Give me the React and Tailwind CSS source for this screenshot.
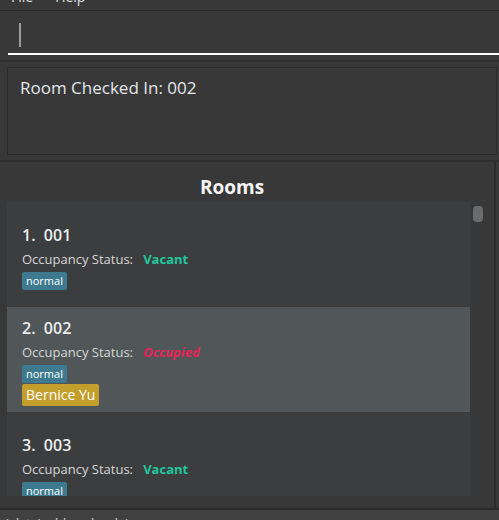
const rooms = [
  { idx: 1, num: '001', occupied: false, tags: ['normal'], guest: null },
  { idx: 2, num: '002', occupied: true, tags: ['normal'], guest: 'Bernice Yu', selected: true },
  { idx: 3, num: '003', occupied: false, tags: ['normal'], guest: null },
]

const RoomCard = ({ room }) => (
  <div
    className={`h-[105px] shrink-0 flex flex-col justify-center pl-[15px] pt-[4px] ${
      room.selected ? 'bg-[#515658]' : 'bg-[#3c3d3f]'
    }`}
  >
    <div className="text-[16px] leading-[22px] font-semibold text-[#ededed] whitespace-pre">
      {room.idx}.  {room.num}
    </div>
    <div className="mt-[4px] text-[13px] leading-[18px] text-[#d6d6d6] whitespace-pre">
      Occupancy Status:  {' '}
      {room.occupied ? (
        <span className="font-bold italic text-[#e8245a]">Occupied</span>
      ) : (
        <span className="font-bold text-[#20c79d]">Vacant</span>
      )}
    </div>
    <div className="mt-[4px] flex">
      {room.tags.map((t) => (
        <span
          key={t}
          className="bg-[#3d7a8f] text-white text-[11px] leading-[18px] px-[4px] rounded-[2px]"
        >
          {t}
        </span>
      ))}
    </div>
    {room.guest && (
      <div className="mt-[1px] flex">
        <span className="bg-[#c39e2b] text-white text-[14px] leading-[22px] px-[4px] rounded-[2px]">
          {room.guest}
        </span>
      </div>
    )}
  </div>
)

export default function App() {
  return (
    <div className="w-[499px] h-[520px] bg-[#383838] flex flex-col overflow-hidden font-['Open_Sans',sans-serif]">
      {/* menu bar, scrolled off the top */}
      <div className="h-[11px] overflow-hidden border-b border-[#2b2b2b] shrink-0">
        <div className="flex gap-[22px] pl-[11px] -mt-[13px] text-[14px] leading-[20px] text-[#e0e0e0]">
          <span>File</span>
          <span>Help</span>
        </div>
      </div>

      {/* command box */}
      <div className="h-[44px] ml-[8px] border-b-2 border-white shrink-0">
        <div className="ml-[11px] mt-[12px] w-[2px] h-[24px] bg-[#9a9a9a]" />
      </div>

      <div className="h-[5px] shrink-0" />
      <div className="h-[2px] bg-[#2e2e2e] shrink-0" />
      <div className="h-[5px] shrink-0" />

      {/* result display */}
      <div className="h-[88px] ml-[7px] mr-[2px] border border-[#2b2b2b] pl-[12px] pt-[8px] shrink-0">
        <p className="text-[17px] leading-[23px] text-[#e2e6ea]">Room Checked In: 002</p>
      </div>

      <div className="h-[5px] shrink-0" />
      <div className="h-[2px] bg-[#2e2e2e] shrink-0" />

      {/* rooms panel */}
      <div className="flex-1 flex flex-col border-r-2 border-[#2b2b2b] mr-[3px] min-h-0">
        <div className="h-[40px] shrink-0 flex items-center justify-center pt-[10px] pr-[30px]">
          <h2 className="text-[19px] leading-[24px] font-bold text-[#f5f5f5]">Rooms</h2>
        </div>
        <div className="flex h-[294px] shrink-0">
          <div className="w-[463px] ml-[7px] flex flex-col overflow-hidden">
            {rooms.map((r) => (
              <RoomCard key={r.idx} room={r} />
            ))}
          </div>
          <div className="pl-[3px] pt-[4px]">
            <div className="w-[10px] h-[16px] rounded-[4px] bg-[#6b6b6b]" />
          </div>
        </div>
      </div>

      {/* status bar */}
      <div className="h-[12px] shrink-0 border-t-2 border-[#2b2b2b] bg-[#414141] overflow-hidden">
        <div className="pl-[3px] pt-[4px] text-[13px] leading-[18px] text-[#d0d0d0]">.\data\addressbook.json</div>
      </div>
    </div>
  )
}
